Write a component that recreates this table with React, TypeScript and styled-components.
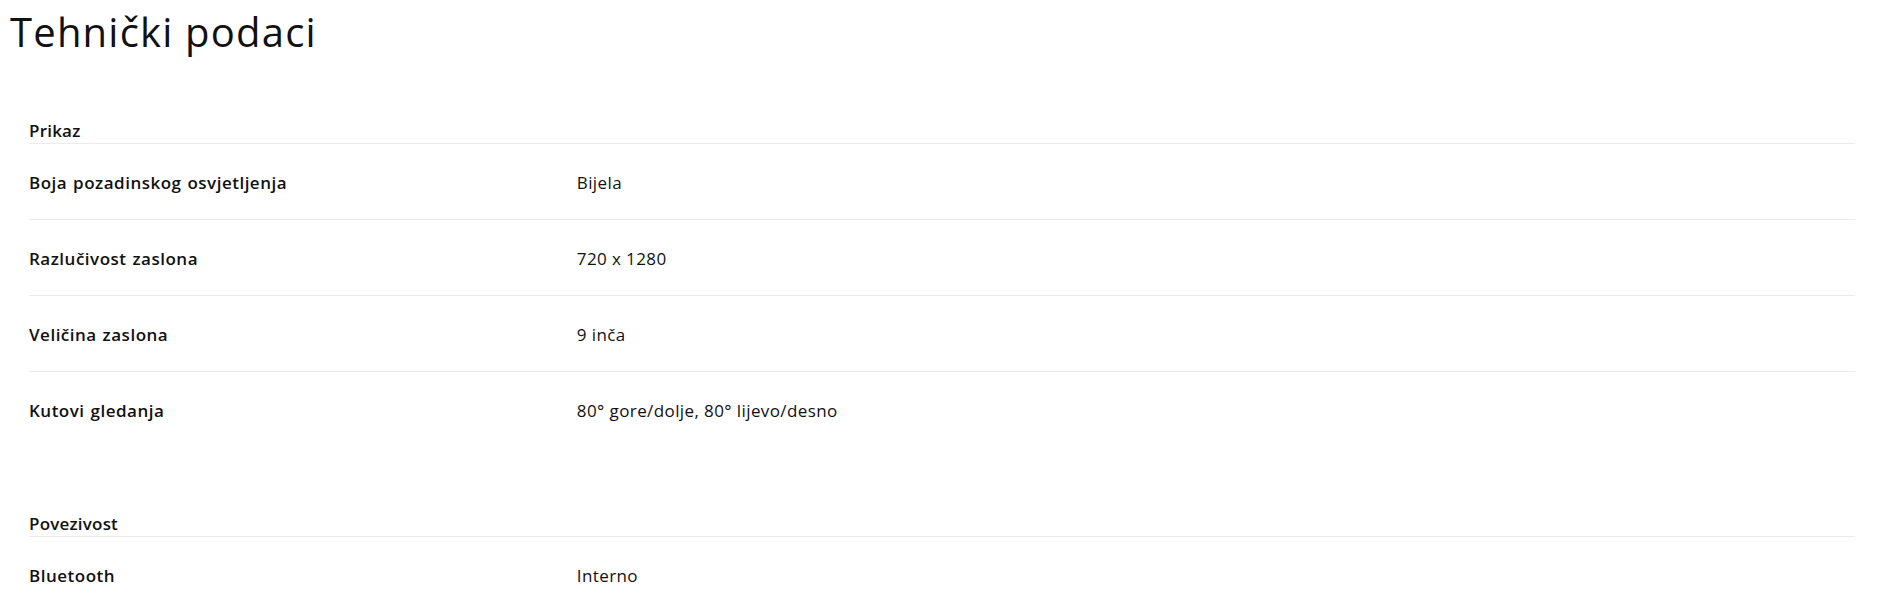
import React from "react";
import styled, { createGlobalStyle } from "styled-components";

const GlobalStyle = createGlobalStyle`
  html, body {
    margin: 0;
    padding: 0;
    background: #ffffff;
  }
  body {
    font-family: "Open Sans", "Noto Sans", "Liberation Sans", sans-serif;
    color: #111111;
    -webkit-font-smoothing: antialiased;
  }
`;

const Page = styled.main`
  display: flex;
  flex-direction: column;
  width: 100%;
  box-sizing: border-box;
`;

const Title = styled.h1`
  margin: 8px 0 0;
  padding-left: 10px;
  font-size: 40px;
  line-height: 48px;
  font-weight: 400;
  letter-spacing: 1.2px;
  color: #111111;
`;

const Specs = styled.div`
  display: flex;
  flex-direction: column;
  gap: 66px;
  margin-top: 65px;
  padding: 0 33px 0 29px;
`;

const Section = styled.section`
  display: flex;
  flex-direction: column;
`;

const SectionHeader = styled.h2`
  margin: 0;
  padding-bottom: 2px;
  font-size: 17px;
  line-height: 20px;
  font-weight: 600;
  letter-spacing: 0.2px;
  color: #111111;
  border-bottom: 1px solid #ececec;
`;

const Row = styled.div<{ $last?: boolean }>`
  display: grid;
  grid-template-columns: 30% 70%;
  align-items: center;
  padding: 29px 0 26px;
  border-bottom: ${(p) => (p.$last ? "1px solid transparent" : "1px solid #ececec")};
  font-size: 17px;
  line-height: 20px;
`;

const Label = styled.div`
  font-weight: 600;
  letter-spacing: 0.5px;
  word-spacing: 1px;
  color: #111111;
`;

const Value = styled.div`
  font-weight: 400;
  letter-spacing: 0.4px;
  color: #111111;
`;

type Spec = { label: string; value: string };
type Group = { title: string; items: Spec[] };

const groups: Group[] = [
  {
    title: "Prikaz",
    items: [
      { label: "Boja pozadinskog osvjetljenja", value: "Bijela" },
      { label: "Razlučivost zaslona", value: "720 x 1280" },
      { label: "Veličina zaslona", value: "9 inča" },
      { label: "Kutovi gledanja", value: "80° gore/dolje, 80° lijevo/desno" },
    ],
  },
  {
    title: "Povezivost",
    items: [{ label: "Bluetooth", value: "Interno" }],
  },
];

export default function App() {
  return (
    <>
      <GlobalStyle />
      <Page>
        <Title>Tehnički podaci</Title>
        <Specs>
          {groups.map((g) => (
            <Section key={g.title}>
              <SectionHeader>{g.title}</SectionHeader>
              {g.items.map((it, i) => (
                <Row key={it.label} $last={i === g.items.length - 1}>
                  <Label>{it.label}</Label>
                  <Value>{it.value}</Value>
                </Row>
              ))}
            </Section>
          ))}
        </Specs>
      </Page>
    </>
  );
}
